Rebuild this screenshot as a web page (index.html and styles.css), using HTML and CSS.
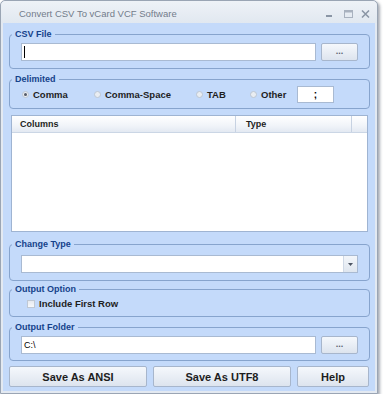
FILE: index.html
```html
<!DOCTYPE html>
<html>
<head>
<meta charset="utf-8">
<link rel="stylesheet" href="styles.css">
</head>
<body>
<div class="window">
  <div class="titlebar">
    <span class="title">Convert CSV To vCard VCF Software</span>
    <div class="controls">
      <svg class="ctl min" width="8" height="8" viewBox="0 0 8 8"><rect x="1" y="5" width="6" height="2" fill="#8a95a5"/></svg>
      <svg class="ctl max" width="9" height="8" viewBox="0 0 9 8"><rect x="0.5" y="0.5" width="8" height="7" fill="none" stroke="#a9b2bf"/><rect x="0.5" y="0.5" width="8" height="2" fill="#a9b2bf"/></svg>
      <svg class="ctl close" width="9" height="8" viewBox="0 0 9 8"><path d="M1 0.5 L8 7.5 M8 0.5 L1 7.5" stroke="#8a95a5" stroke-width="1.5"/></svg>
    </div>
  </div>
  <div class="client">
    <fieldset class="group g-csv">
      <legend>CSV File</legend>
      <div class="filerow">
        <div class="field"><span class="caret"></span></div>
        <div class="btn small">...</div>
      </div>
    </fieldset>
    <fieldset class="group g-delim">
      <legend>Delimited</legend>
      <div class="radiorow">
        <label class="radio r1"><span class="dot on"></span>Comma</label>
        <label class="radio r2"><span class="dot"></span>Comma-Space</label>
        <label class="radio r3"><span class="dot"></span>TAB</label>
        <label class="radio r4"><span class="dot"></span>Other</label>
        <div class="field other">;</div>
      </div>
    </fieldset>
    <div class="list">
      <div class="lhead">
        <div class="col c1">Columns</div>
        <div class="col c2">Type</div>
        <div class="col c3"></div>
      </div>
    </div>
    <fieldset class="group g-type">
      <legend>Change Type</legend>
      <div class="select">
        <div class="selfield"></div>
        <div class="drop"><svg width="5" height="3" viewBox="0 0 5 3"><path d="M0 0 H5 L2.5 3 Z" fill="#4d5563"/></svg></div>
      </div>
    </fieldset>
    <fieldset class="group g-opt">
      <legend>Output Option</legend>
      <label class="check"><span class="box"></span>Include First Row</label>
    </fieldset>
    <fieldset class="group g-out">
      <legend>Output Folder</legend>
      <div class="filerow">
        <div class="field path">C:\</div>
        <div class="btn small">...</div>
      </div>
    </fieldset>
    <div class="actions">
      <div class="btn big w1">Save As ANSI</div>
      <div class="btn big w2">Save As UTF8</div>
      <div class="btn big w3">Help</div>
    </div>
  </div>
</div>
</body>
</html>
```

FILE: styles.css
```css
html, body {
  margin: 0;
  padding: 0;
  background: #ffffff;
}
body {
  font-family: "Liberation Sans", Arial, sans-serif;
}
.window {
  width: 378px;
  height: 394px;
  box-sizing: border-box;
  border: 1px solid #9aa5b4;
  border-radius: 5px 5px 0 0;
  background: #e3e9f1;
  padding: 0 2px 2px 2px;
  box-shadow: 2px 2px 3px rgba(60, 70, 90, 0.45);
  display: flex;
  flex-direction: column;
}
.titlebar {
  height: 22px;
  flex: none;
  display: flex;
  align-items: center;
  background: linear-gradient(#eef2f7, #e1e8f0);
  margin: 0 -2px;
  padding: 0 0 0 18px;
  border-radius: 5px 5px 0 0;
}
.title {
  font-size: 9.5px;
  color: #737c8b;
  padding-top: 3px;
  flex: 1;
}
.controls {
  display: flex;
  align-items: center;
  padding-top: 3px;
}
.ctl {
  display: block;
}
.ctl.min { margin-right: 11px; }
.ctl.max { margin-right: 8px; }
.ctl.close { margin-right: 7px; }
.client {
  flex: 1;
  background: #c4dafa;
  display: flex;
  flex-direction: column;
  align-items: flex-start;
  padding-top: 6px;
}
.group {
  margin: 0 0 0 6px;
  width: 361px;
  box-sizing: border-box;
  border: 1px solid #87a4cd;
  border-radius: 4px;
  padding: 4px 11px 7px 11px;
  min-width: 0;
}
.group legend {
  font-size: 9px;
  font-weight: bold;
  line-height: 10px;
  color: #15428b;
  padding: 0 3px;
  margin-left: -9px;
}
.g-delim { margin-top: 5px; padding: 2px 11px 5px 11px; }
.g-type { margin-top: 7px; padding: 6px 11px 7px 11px; }
.g-opt { margin-top: 3px; padding: 3px 11px 6px 11px; }
.g-out { margin-top: 5px; padding: 4px 11px 6px 11px; }

.filerow {
  display: flex;
  gap: 5px;
}
.field {
  background: #ffffff;
  border: 1px solid #a9bad2;
  box-sizing: border-box;
  height: 18px;
  width: 295px;
  font-size: 9px;
  color: #000;
  display: flex;
  align-items: center;
}
.caret {
  display: block;
  width: 1px;
  height: 12px;
  background: #000;
  margin-left: 2px;
}
.path {
  padding-left: 2px;
}
.btn {
  box-sizing: border-box;
  border: 1px solid #a7b6cc;
  border-radius: 2px;
  background: linear-gradient(#f5f8fc 0%, #e9eef5 50%, #dde4ee 100%);
  display: flex;
  align-items: center;
  justify-content: center;
  color: #1d1d1d;
}
.btn.small {
  width: 37px;
  height: 18px;
  font-size: 9px;
  font-weight: bold;
  color: #5a6270;
  padding-bottom: 3px;
}
.radiorow {
  display: flex;
  align-items: center;
  height: 17px;
  padding-left: 1px;
}
.radio {
  display: flex;
  align-items: center;
  font-size: 9.5px;
  font-weight: bold;
  color: #1e1e1e;
}
.r1 { width: 72px; }
.r2 { width: 102px; }
.r3 { width: 54px; }
.r4 { width: 47px; }
.dot {
  width: 7px;
  height: 7px;
  box-sizing: border-box;
  border-radius: 50%;
  border: 1px solid #bcc6d3;
  background: #e9edf2;
  margin-right: 4px;
  position: relative;
}
.dot.on::after {
  content: "";
  position: absolute;
  left: 1px;
  top: 1px;
  width: 3px;
  height: 3px;
  border-radius: 50%;
  background: #555c6a;
}
.field.other {
  width: 37px;
  height: 17px;
  justify-content: center;
  font-size: 10px;
  font-weight: bold;
}
.list {
  margin: 6px 0 0 8px;
  width: 357px;
  height: 117px;
  box-sizing: border-box;
  border: 1px solid #9fb4d2;
  background: #ffffff;
}
.lhead {
  display: flex;
  height: 16px;
  background: linear-gradient(#ffffff 0%, #f1f4f9 60%, #e3e9f2 100%);
  border-bottom: 1px solid #cbd6e5;
}
.col {
  font-size: 9px;
  font-weight: bold;
  color: #1e1e1e;
  display: flex;
  align-items: center;
  box-sizing: border-box;
  border-right: 1px solid #c7d2e2;
}
.c1 { width: 224px; padding-left: 8px; }
.c2 { width: 116px; padding-left: 10px; }
.c3 { flex: 1; border-right: none; }
.select {
  display: flex;
  height: 18px;
  width: 337px;
  box-sizing: border-box;
  border: 1px solid #a9bad2;
  background: #ffffff;
}
.selfield { flex: 1; }
.drop {
  width: 13px;
  background: linear-gradient(#f3f6fa, #dfe6ef);
  border-left: 1px solid #d0d9e6;
  display: flex;
  align-items: center;
  justify-content: center;
}
.drop svg { display: block; }
.check {
  display: flex;
  align-items: center;
  height: 13px;
  padding-left: 6px;
  font-size: 9.5px;
  font-weight: bold;
  color: #1e1e1e;
}
.box {
  width: 8px;
  height: 8px;
  box-sizing: border-box;
  border: 1px solid #bfc8d4;
  background: linear-gradient(#e6eaf0, #f7f9fb);
  margin-right: 4px;
}
.actions {
  margin: 5px 0 0 6px;
  display: flex;
  gap: 6px;
}
.btn.big {
  height: 21px;
  font-size: 11px;
  font-weight: bold;
}
.w1 { width: 138px; }
.w2 { width: 138px; }
.w3 { width: 72px; }
```
